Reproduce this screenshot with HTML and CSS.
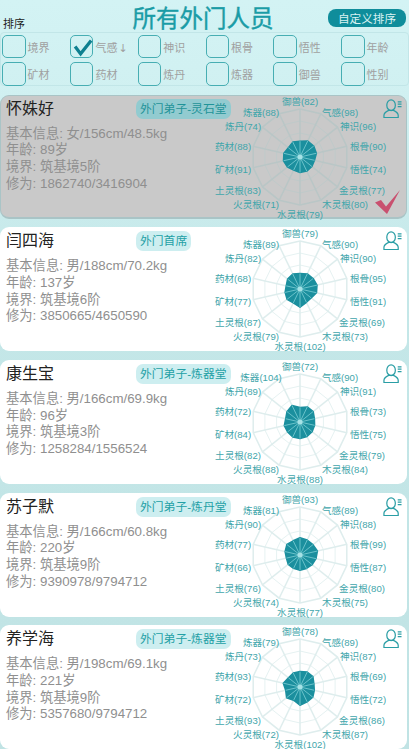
FILE: index.html
```html
<!DOCTYPE html>
<html lang="zh">
<head>
<meta charset="utf-8">
<title>所有外门人员</title>
<link rel="stylesheet" href="styles.css">
</head>
<body>
<header class="head">
  <span class="sort-title">排序</span>
  <h1 class="title">所有外门人员</h1>
  <button class="custom">自定义排序</button>
</header>
<section class="filters">
  <label class="opt"><i class="box"></i>境界</label>
  <label class="opt"><i class="box"><svg viewBox="0 0 24 24" class="tick"><path d="M4.500 11.500l6 8L22 5" /></svg></i><span>气感<span class="arrow">↓</span></span></label>
  <label class="opt"><i class="box"></i>神识</label>
  <label class="opt"><i class="box"></i>根骨</label>
  <label class="opt"><i class="box"></i>悟性</label>
  <label class="opt"><i class="box"></i>年龄</label>
  <label class="opt"><i class="box"></i>矿材</label>
  <label class="opt"><i class="box"></i>药材</label>
  <label class="opt"><i class="box"></i>炼丹</label>
  <label class="opt"><i class="box"></i>炼器</label>
  <label class="opt"><i class="box"></i>御兽</label>
  <label class="opt"><i class="box"></i>性别</label>
</section>
<main class="list">
  <article class="card selected">
    <div class="info">
      <h2 class="name">怀姝好</h2>
      <p>基本信息: 女/156cm/48.5kg</p><p>年龄: 89岁</p><p>境界: 筑基境5阶</p><p>修为: 1862740/3416904</p>
    </div>
    <span class="tag">外门弟子-灵石堂</span>
    <svg class="radar" viewBox="0 0 200 132" data-values="82,98,96,90,74,77,80,79,71,83,91,88,74,88"></svg>
    <svg class="person" viewBox="0 0 20 20"><use href="#p"/></svg>
    <svg class="mark" viewBox="0 0 25 24"><path d="M0 12.500L6 10L11 16.500L25 0L12 24z"/></svg>
  </article>
  <article class="card">
    <div class="info">
      <h2 class="name">闫四海</h2>
      <p>基本信息: 男/188cm/70.2kg</p><p>年龄: 137岁</p><p>境界: 筑基境6阶</p><p>修为: 3850665/4650590</p>
    </div>
    <span class="tag">外门首席</span>
    <svg class="radar" viewBox="0 0 200 132" data-values="79,90,90,95,91,69,73,102,79,87,77,68,82,89"></svg>
    <svg class="person" viewBox="0 0 20 20"><use href="#p"/></svg>
  </article>
  <article class="card">
    <div class="info">
      <h2 class="name">康生宝</h2>
      <p>基本信息: 男/166cm/69.9kg</p><p>年龄: 96岁</p><p>境界: 筑基境3阶</p><p>修为: 1258284/1556524</p>
    </div>
    <span class="tag">外门弟子-炼器堂</span>
    <svg class="radar" viewBox="0 0 200 132" data-values="72,90,91,73,75,79,84,88,88,82,84,72,89,104"></svg>
    <svg class="person" viewBox="0 0 20 20"><use href="#p"/></svg>
  </article>
  <article class="card">
    <div class="info">
      <h2 class="name">苏子默</h2>
      <p>基本信息: 男/166cm/60.8kg</p><p>年龄: 220岁</p><p>境界: 筑基境9阶</p><p>修为: 9390978/9794712</p>
    </div>
    <span class="tag">外门弟子-炼丹堂</span>
    <svg class="radar" viewBox="0 0 200 132" data-values="93,89,88,99,87,80,75,77,74,76,66,77,90,81"></svg>
    <svg class="person" viewBox="0 0 20 20"><use href="#p"/></svg>
  </article>
  <article class="card">
    <div class="info">
      <h2 class="name">养学海</h2>
      <p>基本信息: 男/198cm/69.1kg</p><p>年龄: 221岁</p><p>境界: 筑基境9阶</p><p>修为: 5357680/9794712</p>
    </div>
    <span class="tag">外门弟子-炼器堂</span>
    <svg class="radar" viewBox="0 0 200 132" data-values="78,89,87,69,72,86,87,102,72,93,72,93,73,79"></svg>
    <svg class="person" viewBox="0 0 20 20"><use href="#p"/></svg>
  </article>
</main>
<svg class="defs" width="0" height="0"><defs><g id="p">
  <ellipse cx="8.500" cy="6.500" rx="4.500" ry="5.700"/><path d="M1 19.500v-2.500c0-2.500 3-4 5-5h5c2 1 5 2.500 5 5v2.500z"/>
  <path d="M15.500 3h4M15.500 5.500h4M15.500 8h4"/>
</g></defs></svg>
<script src="radar.js"></script>
</body>
</html>
```
FILE: styles.css
```css
* { box-sizing: border-box; }
html, body { margin: 0; }
body {
  width: 409px;
  height: 749px;
  overflow: hidden;
  background: linear-gradient(#d3f3f4 0, #d0f0f1 100px, #c4e7e8 300px, #c0e3e4 100%);
  font-family: "Liberation Sans", "Noto Sans CJK SC", sans-serif;
}
.head {
  height: 32px;
  position: relative;
  display: flex;
  justify-content: center;
}
.sort-title { position: absolute; left: 3px; top: 17px; font-size: 11px; line-height: 14px; color: #222; }
.title { margin: 4px 0 0 -3px; font-size: 23.500px; line-height: 30px; font-weight: 400; color: #1a9ca6; -webkit-text-stroke: 0.4px #1a9ca6; }
.custom {
  position: absolute; right: 3px; top: 9px;
  width: 78px; height: 18px; padding: 0;
  border: 0; border-radius: 8px;
  background: #0f8d9b; color: #d9f2f2;
  font: 11.600px "Liberation Sans", "Noto Sans CJK SC", sans-serif;
}
.filters {
  height: 54px;
  padding: 0 0 0 1.300px;
  display: grid;
  grid-template-columns: repeat(6, 67.800px);
  grid-auto-rows: 27.300px;
  border: 1px solid #c2e6e8;
  border-radius: 4px;
}
.opt { display: flex; align-items: center; gap: 2px; font-size: 11px; color: #a0a0a0; }
.arrow { font-family: "DejaVu Sans", sans-serif; font-size: 11px; margin-left: 1px; }
.box { width: 23.300px; height: 23.500px; border: 1px solid #47aeb3; border-radius: 5px; display: block; flex: none; }
.tick { display: block; width: 22px; height: 22px; }
.tick path { fill: none; stroke: #0f8090; stroke-width: 3.600px; }
.list { padding-top: 8.500px; display: flex; flex-direction: column; gap: 8.700px; }
.card {
  position: relative;
  height: 124px;
  width: 407px;
  background: #fff;
  border-radius: 9px;
  padding: 2px 6px;
}
.card.selected { background: #c9c9c9; border: 1px solid #a9c4c6; border-bottom-width: 2px; padding: 1px 5px; }
.name { margin: 0 0 5px; font-size: 16px; line-height: 24px; font-weight: 400; color: #222; }
.info p { margin: 0; font-size: 13.300px; line-height: 16.700px; color: #8f8f8f; }
.tag {
  position: absolute; left: 136px; top: 4px;
  height: 20px; padding: 0 4px;
  border-radius: 7px;
  background: #cdeef0;
  color: #23a0a5;
  font-size: 11.800px; line-height: 20px;
}
.selected .tag { left: 135px; top: 3px; background: #92cbd0; color: #1f9398; }
.radar { position: absolute; left: 200px; top: -4px; width: 200px; height: 132px; overflow: visible; }
.selected .radar { left: 199px; top: -5px; }
.radar text { font-size: 9.600px; fill: #3fa6ab; text-anchor: middle; dominant-baseline: central; }
.radar .grid { fill: none; stroke: #e6f2f2; stroke-width: 1; }
.radar .outer { fill: none; stroke: #deeded; stroke-width: 1.500px; }
.radar .spoke { stroke: #deeded; stroke-width: 1.500px; }
.selected .radar .grid { stroke: #bfcaca; }
.selected .radar .outer, .selected .radar .spoke { stroke: #b9c6c6; }
.radar .shape { fill: #1b8f9e; stroke: #1b8f9e; stroke-width: 1.500px; stroke-linejoin: round; }
.radar .inner { stroke: #7fcfd6; stroke-width: 0.800px; }
.radar .hub { fill: #a6e2e6; }
.person { position: absolute; right: 5px; top: 4px; width: 19px; height: 19px; }
.person use { fill: none; stroke: #2a9ea5; stroke-width: 1.300px; }
.selected .person { right: 4px; top: 3px; }
.mark { position: absolute; right: 6px; bottom: 3px; width: 25px; height: 24px; }
.mark path { fill: #c9506f; }
.defs { position: absolute; }
```
FILE: radar.js
```js
var NAMES = ["御兽","气感","神识","根骨","悟性","金灵根","木灵根","水灵根","火灵根","土灵根","矿材","药材","炼丹","炼器"];
var LABELS = [[0,-56],[40,-45],[58,-31],[68,-11],[68,12],[62,33],[45,47],[0,57],[-44,47],[-62,33],[-67,12],[-67,-11],[-57,-31],[-39,-45]];
var NS = "http://www.w3.org/2000/svg";
var CX = 100, CY = 66, R = 48, N = 14;

function add(parent, tag, attrs) {
  var el = document.createElementNS(NS, tag);
  for (var key in attrs) el.setAttribute(key, attrs[key]);
  parent.appendChild(el);
  return el;
}
function point(i, r) {
  var a = -Math.PI / 2 + i * 2 * Math.PI / N;
  return [CX + r * Math.cos(a), CY + r * Math.sin(a)];
}
function ring(fn) {
  var pts = [];
  for (var i = 0; i < N; i++) pts.push(point(i, fn(i)).map(function (v) { return v.toFixed(1); }).join(","));
  return pts.join(" ");
}
document.querySelectorAll(".radar").forEach(function (svg) {
  var values = svg.getAttribute("data-values").split(",").map(Number);
  [12, 24, 36].forEach(function (r) {
    add(svg, "polygon", { "class": "grid", points: ring(function () { return r; }) });
  });
  add(svg, "polygon", { "class": "outer", points: ring(function () { return R; }) });
  for (var i = 0; i < N; i++) {
    var p = point(i, R);
    add(svg, "line", { "class": "spoke", x1: CX, y1: CY, x2: p[0], y2: p[1] });
  }
  var radius = function (k) { return 0.12 * values[k] + 6; };
  add(svg, "polygon", { "class": "shape", points: ring(radius) });
  for (var j = 0; j < N; j++) {
    var q = point(j, radius(j));
    add(svg, "line", { "class": "inner", x1: CX, y1: CY, x2: q[0], y2: q[1] });
  }
  add(svg, "circle", { "class": "hub", cx: CX, cy: CY, r: 2.5 });
  NAMES.forEach(function (name, k) {
    var t = add(svg, "text", { x: CX + LABELS[k][0], y: CY + LABELS[k][1] });
    t.textContent = name + "(" + values[k] + ")";
  });
});
```
